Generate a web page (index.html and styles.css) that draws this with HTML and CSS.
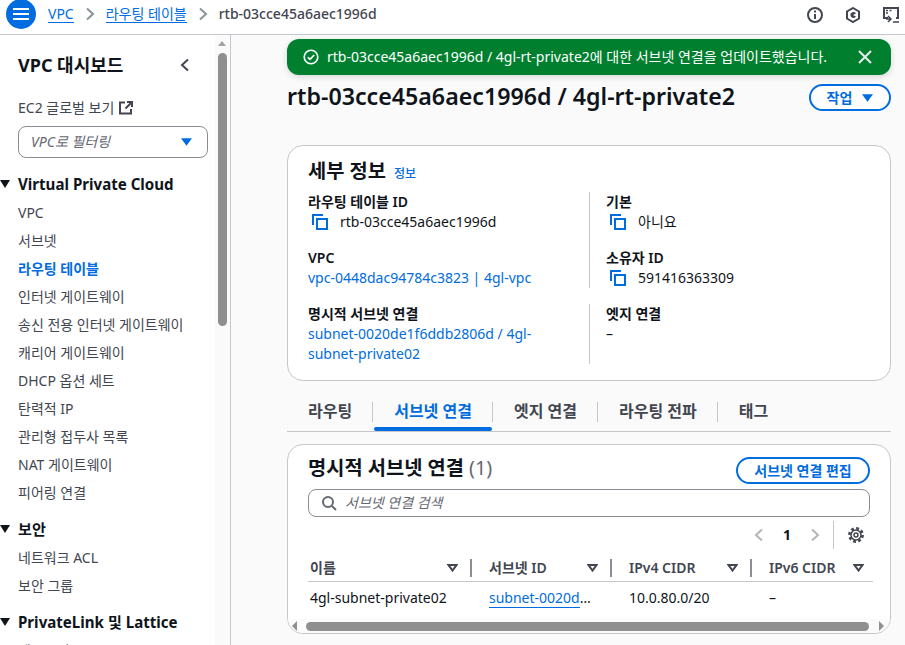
FILE: index.html
```html
<!DOCTYPE html>
<html lang="ko">
<head>
<meta charset="utf-8">
<title>라우팅 테이블</title>
<link rel="stylesheet" href="styles.css">
</head>
<body>
<header class="topbar">
  <button class="menu-btn" aria-label="메뉴">
    <svg width="16" height="14" viewBox="0 0 16 14"><path d="M0 2h16M0 7h16M0 12h16" stroke="#fff" stroke-width="2"/></svg>
  </button>
  <nav class="crumbs">
    <a class="crumb-link">VPC</a>
    <svg class="crumb-sep" width="10" height="14" viewBox="0 0 10 14"><path d="M2 1.500 8 7l-6 5.500" fill="none" stroke="#879596" stroke-width="2"/></svg>
    <a class="crumb-link">라우팅 테이블</a>
    <svg class="crumb-sep" width="10" height="14" viewBox="0 0 10 14"><path d="M2 1.500 8 7l-6 5.500" fill="none" stroke="#879596" stroke-width="2"/></svg>
    <span class="crumb-current">rtb-03cce45a6aec1996d</span>
  </nav>
  <div class="top-icons">
    <svg width="16" height="16" viewBox="0 0 16 16"><circle cx="8" cy="8" r="7" fill="none" stroke="#424650" stroke-width="2"/><path d="M8 7v5" stroke="#424650" stroke-width="2"/><path d="M8 3.500v2" stroke="#424650" stroke-width="2"/></svg>
    <svg width="16" height="16" viewBox="0 0 16 16"><path d="M8 1l6 3.500v7L8 15l-6-3.500v-7z" fill="none" stroke="#424650" stroke-width="2"/><path d="M11 6.500A3 3 0 1 0 11 9.500L8 8z" fill="#424650"/></svg>
    <svg width="16" height="16" viewBox="0 0 16 16"><path d="M5 11H1V1h14v10h-2" fill="none" stroke="#424650" stroke-width="2"/><path d="M3 3.500h2M6.500 3.500h2M3 6h2" stroke="#424650" stroke-width="1.500"/><path d="M5 9l3 3-3 3M3 12h4M10 15h6" fill="none" stroke="#424650" stroke-width="1.500"/></svg>
  </div>
</header>
<div class="shell">
  <aside class="side">
    <div class="side-body">
      <div class="side-head">
        <h2 class="side-title">VPC 대시보드</h2>
        <svg width="10" height="14" viewBox="0 0 10 14"><path d="M8 1.500 2 7l6 5.500" fill="none" stroke="#424650" stroke-width="2"/></svg>
      </div>
      <div class="ec2">EC2 글로벌 보기
        <svg width="14" height="14" viewBox="0 0 14 14"><path d="M6 1.500H1v11h11V8" fill="none" stroke="#424650" stroke-width="2"/><path d="M8 1h5v5M13 1 6.500 7.500" fill="none" stroke="#424650" stroke-width="2"/></svg>
      </div>
      <div class="select">
        <span class="placeholder">VPC로 필터링</span>
        <svg width="11" height="8" viewBox="0 0 12 8"><path d="M0 0h12L6 8z" fill="#006ce0"/></svg>
      </div>
      <div class="group-head"><i class="caret"></i>Virtual Private Cloud</div>
      <ul class="links">
        <li>VPC</li>
        <li>서브넷</li>
        <li class="active">라우팅 테이블</li>
        <li>인터넷 게이트웨이</li>
        <li>송신 전용 인터넷 게이트웨이</li>
        <li>캐리어 게이트웨이</li>
        <li>DHCP 옵션 세트</li>
        <li>탄력적 IP</li>
        <li>관리형 접두사 목록</li>
        <li>NAT 게이트웨이</li>
        <li>피어링 연결</li>
      </ul>
      <div class="group-head"><i class="caret"></i>보안</div>
      <ul class="links">
        <li>네트워크 ACL</li>
        <li>보안 그룹</li>
      </ul>
      <div class="group-head"><i class="caret"></i>PrivateLink 및 Lattice</div>
      <ul class="links">
        <li>엔드포인트</li>
      </ul>
    </div>
    <div class="side-scroll">
      <i class="arrow-up"></i>
      <div class="side-thumb"></div>
    </div>
  </aside>
  <main class="main">
    <div class="flash">
      <svg class="flash-ok" width="16" height="16" viewBox="0 0 16 16"><circle cx="8" cy="8" r="6.800" fill="none" stroke="#fff" stroke-width="1.600"/><path d="M4.800 8.200 7 10.400l4.200-4.400" fill="none" stroke="#fff" stroke-width="1.600"/></svg>
      <span class="flash-text">rtb-03cce45a6aec1996d / 4gl-rt-private2에 대한 서브넷 연결을 업데이트했습니다.</span>
      <svg width="14" height="14" viewBox="0 0 14 14"><path d="M1 1l12 12M13 1 1 13" stroke="#e9ebed" stroke-width="2"/></svg>
    </div>
    <div class="page-head">
      <h1 class="page-title">rtb-03cce45a6aec1996d / 4gl-rt-private2</h1>
      <button class="btn btn-action">작업
        <svg width="11" height="8" viewBox="0 0 12 8"><path d="M0 0h12L6 8z" fill="#006ce0"/></svg>
      </button>
    </div>
    <section class="card detail">
      <div class="card-title-row"><h2 class="card-title">세부 정보</h2><a class="info">정보</a></div>
      <div class="detail-grid">
        <div class="detail-col first">
          <div class="field">
            <div class="label">라우팅 테이블 ID</div>
            <div class="value copy">
              <svg class="copy-icon" width="16" height="16" viewBox="0 0 16 16"><path d="M1 11V1h10" fill="none" stroke="#006ce0" stroke-width="2"/><path d="M5 5h10v10H5z" fill="none" stroke="#006ce0" stroke-width="2"/></svg>
              <span>rtb-03cce45a6aec1996d</span>
            </div>
          </div>
          <div class="field">
            <div class="label">VPC</div>
            <a class="value link">vpc-0448dac94784c3823 | 4gl-vpc</a>
          </div>
        </div>
        <div class="detail-col">
          <div class="field">
            <div class="label">기본</div>
            <div class="value copy">
              <svg class="copy-icon" width="16" height="16" viewBox="0 0 16 16"><path d="M1 11V1h10" fill="none" stroke="#006ce0" stroke-width="2"/><path d="M5 5h10v10H5z" fill="none" stroke="#006ce0" stroke-width="2"/></svg>
              <span>아니요</span>
            </div>
          </div>
          <div class="field">
            <div class="label">소유자 ID</div>
            <div class="value copy">
              <svg class="copy-icon" width="16" height="16" viewBox="0 0 16 16"><path d="M1 11V1h10" fill="none" stroke="#006ce0" stroke-width="2"/><path d="M5 5h10v10H5z" fill="none" stroke="#006ce0" stroke-width="2"/></svg>
              <span>591416363309</span>
            </div>
          </div>
        </div>
        <div class="detail-col first">
          <div class="field">
            <div class="label">명시적 서브넷 연결</div>
            <a class="value link narrow">subnet-0020de1f6ddb2806d / 4gl-subnet-private02</a>
          </div>
        </div>
        <div class="detail-col">
          <div class="field">
            <div class="label">엣지 연결</div>
            <div class="value">–</div>
          </div>
        </div>
      </div>
    </section>
    <div class="tabs">
      <div class="tab">라우팅</div>
      <div class="tab active"><span>서브넷 연결</span></div>
      <div class="tab">엣지 연결</div>
      <div class="tab">라우팅 전파</div>
      <div class="tab last">태그</div>
    </div>
    <section class="card table-card">
      <div class="tc-head">
        <h2 class="card-title">명시적 서브넷 연결 <span class="count">(1)</span></h2>
        <button class="btn btn-edit">서브넷 연결 편집</button>
      </div>
      <div class="search">
        <svg width="16" height="16" viewBox="0 0 16 16"><circle cx="7" cy="7" r="5" fill="none" stroke="#656871" stroke-width="2"/><path d="M11 11l4 4" stroke="#656871" stroke-width="2"/></svg>
        <span class="placeholder">서브넷 연결 검색</span>
      </div>
      <div class="pager">
        <svg width="10" height="14" viewBox="0 0 10 14"><path d="M8 1.500 2 7l6 5.500" fill="none" stroke="#b4b4bb" stroke-width="2"/></svg>
        <b class="page-num">1</b>
        <svg width="10" height="14" viewBox="0 0 10 14"><path d="M2 1.500 8 7l-6 5.500" fill="none" stroke="#b4b4bb" stroke-width="2"/></svg>
        <span class="pager-div"></span>
        <svg width="16" height="16" viewBox="0 0 16 16"><circle cx="8" cy="8" r="6.600" fill="none" stroke="#424650" stroke-width="2.600" stroke-dasharray="2.800 2.380"/><circle cx="8" cy="8" r="5" fill="#fff" stroke="#424650" stroke-width="1.500"/><circle cx="8" cy="8" r="2" fill="none" stroke="#424650" stroke-width="1.500"/></svg>
      </div>
      <div class="table-wrap">
        <div class="t-row t-head">
          <div class="t-cell c1"><span>이름</span><svg class="sort" width="11" height="8" viewBox="0 0 11 8"><path d="M1.500 1h8L5.500 6.500z" fill="none" stroke="#424650" stroke-width="2"/></svg></div>
          <div class="t-cell c2"><span>서브넷 ID</span><svg class="sort" width="11" height="8" viewBox="0 0 11 8"><path d="M1.500 1h8L5.500 6.500z" fill="none" stroke="#424650" stroke-width="2"/></svg></div>
          <div class="t-cell c3"><span>IPv4 CIDR</span><svg class="sort" width="11" height="8" viewBox="0 0 11 8"><path d="M1.500 1h8L5.500 6.500z" fill="none" stroke="#424650" stroke-width="2"/></svg></div>
          <div class="t-cell c4"><span>IPv6 CIDR</span><svg class="sort" width="11" height="8" viewBox="0 0 11 8"><path d="M1.500 1h8L5.500 6.500z" fill="none" stroke="#424650" stroke-width="2"/></svg></div>
        </div>
        <div class="t-row t-body">
          <div class="t-cell c1">4gl-subnet-private02</div>
          <div class="t-cell c2"><a class="under">subnet-0020d</a>…</div>
          <div class="t-cell c3">10.0.80.0/20</div>
          <div class="t-cell c4">–</div>
        </div>
      </div>
      <div class="h-scroll">
        <i class="arrow-left"></i>
        <div class="h-thumb"></div>
        <i class="arrow-right"></i>
      </div>
    </section>
  </main>
</div>
</body>
</html>
```
FILE: styles.css
```css
* { box-sizing: border-box; }
html, body { margin: 0; height: 645px; overflow: hidden; }
body {
  font-family: "Noto Sans", "Noto Sans CJK KR", sans-serif;
  font-size: 14px;
  line-height: 20px;
  color: #0f141a;
  background: #fff;
}
h1, h2, ul { margin: 0; padding: 0; }
ul { list-style: none; }
button { font-family: inherit; }

.topbar {
  height: 35px;
  display: flex;
  align-items: center;
  padding: 0 6px;
  border-bottom: 1px solid #c6c6cd;
  background: #fff;
}
.menu-btn {
  width: 30px; height: 30px; margin-top: -7px;
  border: 0; border-radius: 50%; padding: 0;
  background: #006ce0;
  display: flex; align-items: center; justify-content: center;
}
.crumbs { display: flex; align-items: center; margin: -6px 0 0 12px; }
.crumb-link { color: #006ce0; border-bottom: 1px solid #006ce0; line-height: 17px; }
.crumb-sep { margin: 0 11px; }
.crumb-current { color: #424650; font-weight: 500; }
.top-icons { margin-left: auto; display: flex; gap: 22px; align-items: center; margin-top: -5px; }

.shell { display: flex; height: 610px; }
.side {
  width: 231px; flex: none;
  display: flex;
  border-right: 1px solid #c6c6cd;
  overflow: hidden;
}
.side-body { width: 215px; flex: none; }
.side-head {
  display: flex; align-items: center; justify-content: space-between;
  padding: 10px 25px 0 18px;
  height: 50px;
}
.side-title { font-size: 18px; line-height: 24px; font-weight: 700; }
.ec2 { margin: 9px 0 0 18px; display: flex; align-items: center; gap: 5px; color: #424650; height: 27px; }
.select {
  margin: 5px 7px 0 18px; height: 32px;
  border: 1px solid #8c8c94; border-radius: 8px;
  display: flex; align-items: center; justify-content: space-between;
  padding: 0 15px 0 12px;
}
.placeholder { font-style: italic; color: #656871; }
.group-head {
  display: flex; align-items: center;
  font-size: 15.100px; font-weight: 700;
  height: 24px;
  margin-top: 10px;
}
.select + .group-head { margin-top: 14px; }
.caret {
  width: 0; height: 0; margin-right: 8px;
  border-left: 5px solid transparent; border-right: 5px solid transparent;
  border-top: 8px solid #0f141a;
}
.links { padding: 2px 0 0 18px; margin-top: 1px; }
.links li { height: 28px; line-height: 28px; color: #424650; white-space: nowrap; }
.links li.active { color: #006ce0; font-weight: 700; }
.side-scroll { width: 15px; padding-left: 3px; background: #fafafa; }
.arrow-up {
  display: block; width: 0; height: 0; margin: 6px 0 0 0;
  border-left: 4.500px solid transparent; border-right: 4.500px solid transparent;
  border-bottom: 5px solid #a3a3a3;
}
.side-thumb { margin-top: 7px; height: 273px; width: 9px; border-radius: 5px; background: #8f8f8f; }

.main {
  flex: 1; min-width: 0;
  background: #fafafa;
  padding: 0 14px 0 56px;
  position: relative;
  overflow: hidden;
}
.flash {
  position: absolute; left: 56px; top: 4px; width: 604px; height: 36px;
  background: #00802f; border-radius: 12px; color: #fff;
  display: flex; align-items: center; padding: 0 19px 0 16px;
  box-shadow: 0 2px 6px rgba(0,28,36,.15);
}
.flash-ok { flex: none; }
.flash-text { margin-left: 8px; flex: 1; white-space: nowrap; }
.page-head {
  display: flex; justify-content: space-between; align-items: flex-start;
  padding-top: 47px; height: 110px;
}
.page-title { font-size: 23.200px; line-height: 30px; font-weight: 600; white-space: nowrap; margin-top: -1px; }
.btn {
  border: 2px solid #006ce0; border-radius: 20px; background: #fff;
  color: #006ce0; font-weight: 700; font-size: 14px; line-height: 20px;
  display: flex; align-items: center; justify-content: center;
}
.btn-action { width: 82px; height: 27px; gap: 10px; margin-top: 2px; }
.card { background: #fff; border: 1px solid #c6c6cd; border-radius: 16px; }
.detail { height: 236px; padding: 10px 20px 0 20px; }
.card-title-row { display: flex; align-items: baseline; gap: 8px; height: 33px; }
.card-title { font-size: 19.800px; line-height: 30px; font-weight: 700; white-space: nowrap; }
.info { font-size: 12px; color: #006ce0; font-weight: 500; }
.detail-grid { display: grid; grid-template-columns: 298px 1fr; grid-template-rows: 96px 60px; row-gap: 16px; margin-top: 3px; }
.detail-col.first { border-right: 1px solid #c6c6cd; margin-right: 16px; padding-right: 20px; }
.field { margin-bottom: 16px; }
.label { font-weight: 600; line-height: 20px; }
.value { line-height: 20px; }
.copy { display: flex; align-items: center; height: 20px; }
.copy-icon { margin: 0 12px 0 4px; flex: none; }
.link { color: #006ce0; display: block; }
.narrow { width: 240px; }

.tabs { display: flex; height: 37px; margin-top: 14px; border-bottom: 1px solid #c6c6cd; padding-top: 7px; }
.tab { height: 20px; padding: 0 20px 0 21px; font-size: 16px; font-weight: 600; color: #424650; border-right: 1px solid #c6c6cd; line-height: 18px; white-space: nowrap; position: relative; }
.tab.last { border-right: 0; }
.tab.active { color: #006ce0; }
.tab.active::after {
  content: ""; position: absolute; left: 1px; right: 0; top: 25px; height: 4px;
  background: #006ce0; border-radius: 2px;
}
.table-card { margin-top: 12px; height: 190px; padding: 0 20px; position: relative; overflow: hidden; }
.tc-head { display: flex; justify-content: space-between; align-items: flex-start; padding-top: 8px; height: 44px; }
.count { color: #656871; font-weight: 400; }
.btn-edit { height: 27px; width: 134px; white-space: nowrap; padding: 0; margin-top: 4px; }
.search {
  height: 28px; border: 1px solid #8c8c94; border-radius: 8px;
  display: flex; align-items: center; gap: 8px; padding: 0 12px;
}
.pager { display: flex; align-items: center; justify-content: flex-end; height: 28px; margin-top: 4px; padding-right: 6px; }
.page-num { margin: 0 19px; }
.pager-div { width: 1px; height: 28px; background: #c6c6cd; margin: 0 14px 0 13px; }
.table-wrap { margin: 9px -3px 0 0; }
.t-row { display: flex; }
.t-head { height: 24px; border-bottom: 1px solid #c6c6cd; font-weight: 600; color: #424650; }
.t-cell { flex: none; white-space: nowrap; }
.t-head .t-cell { display: flex; align-items: center; height: 18px; margin-top: 1px; padding-right: 12px; justify-content: space-between; border-right: 2px solid #8c8c94; }
.c1 { width: 164px; padding-left: 2px; }
.c2 { width: 140px; padding-left: 17px; }
.c3 { width: 140px; padding-left: 17px; }
.c4 { width: 121px; padding-left: 17px; }
.t-head .c4 { border-right: 0; padding-right: 9px; }
.sort { flex: none; }
.t-body { height: 32px; align-items: center; }
.under { color: #006ce0; border-bottom: 1px solid #006ce0; }
.h-scroll {
  position: absolute; left: 0; right: 0; bottom: 0; height: 14px;
  display: flex; align-items: center; padding: 0 6px 0 4px;
  background: #fbfbfb;
}
.h-thumb { flex: 1; height: 9px; border-radius: 5px; background: #8f8f8f; margin: 0 10px 0 9px; }
.arrow-left { border-top: 5px solid transparent; border-bottom: 5px solid transparent; border-right: 5px solid #8f8f8f; }
.arrow-right { border-top: 5px solid transparent; border-bottom: 5px solid transparent; border-left: 5px solid #8f8f8f; }
```
